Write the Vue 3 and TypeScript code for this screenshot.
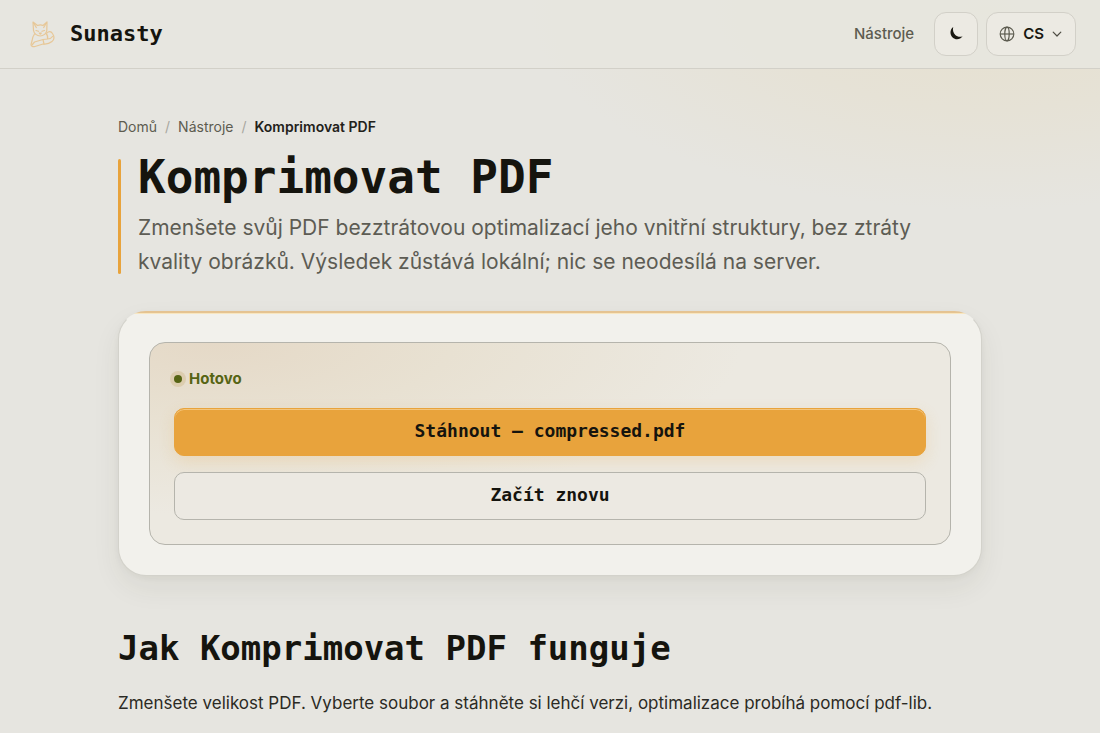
<script setup lang="ts">
import { ref } from 'vue'

interface Crumb {
  label: string
  href?: string
}

const crumbs: Crumb[] = [
  { label: 'Domů', href: '#domu' },
  { label: 'Nástroje', href: '#nastroje' },
  { label: 'Komprimovat PDF' },
]

const fileName = ref<string>('compressed.pdf')
</script>

<template>
  <div class="page">
    <header class="topbar">
      <a class="brand" href="#domu">
        <svg class="brand-mark" viewBox="0 0 36 36" aria-hidden="true">
          <g fill="none" stroke="#e8b468" stroke-width="1.200" stroke-linejoin="round" stroke-linecap="round" opacity="0.6">
            <path d="M9.500 14.500 9 6l4.500 3.500c2-.7 4-.7 5.500 0L23 6l-.2 8.500c-.3 3-3.300 5.500-6.600 5.500s-6.200-2.500-6.700-5.500z" />
            <path d="m10.500 8.500 1.800 3M21.500 8.500l-1.800 3M12 14.500l2.500.8M20.500 14.500l-2.500.8M15.300 17h2l-1 1.200z" />
            <path d="M10.500 18c-1.500 2-2.300 4.500-2.500 7l-1 3.500c0 2 2 2.500 4 2l8-2.500c3.500.5 6.500-.5 9-2.500 2.500-1.500 2.500-5 .5-8-1.500-2.500-4-2.500-5.500-.5" />
            <path d="M22 17.500c1.500 1.500 2 3.500 1.500 5.500l-4.500.5-8.500 2.500-2.500 3M19 23.500l1 4.500M23.500 23c2 0 4-1 5-2.500" />
          </g>
        </svg>
        <span>Sunasty</span>
      </a>
      <nav class="actions" aria-label="Hlavní navigace">
        <a class="nav-link" href="#nastroje">Nástroje</a>
        <button class="tool" type="button" aria-label="Tmavý režim">
          <svg width="16" height="16" viewBox="0 0 16 16" aria-hidden="true">
            <path d="M5.200 1C1.700 3.600 1.700 8.600 4.600 11.400c3 2.900 7.700 2.200 10-1.200-2.500 1-5.400.6-7.300-1.200C5.200 7 4.500 3.900 5.200 1z" fill="#191811" />
          </svg>
        </button>
        <button class="tool lang" type="button" aria-label="Jazyk: CS">
          <svg width="16" height="16" viewBox="0 0 16 16" fill="none" stroke="#5d5c50" stroke-width="1.200" aria-hidden="true">
            <circle cx="8" cy="8" r="6.800" />
            <ellipse cx="8" cy="8" rx="2.200" ry="6.800" />
            <path d="M1.200 8h13.600" />
          </svg>
          <span>CS</span>
          <svg width="10" height="10" viewBox="0 0 10 10" fill="none" stroke="#4c4b42" stroke-width="1.200" stroke-linecap="round" stroke-linejoin="round" aria-hidden="true">
            <path d="m1.200 3.200 3.800 3.800 3.800-3.800" />
          </svg>
        </button>
      </nav>
    </header>

    <main class="content">
      <nav class="crumbs" aria-label="Drobečková navigace">
        <template v-for="(crumb, i) in crumbs" :key="crumb.label">
          <span v-if="i > 0" class="slash" aria-hidden="true">/</span>
          <a v-if="crumb.href" :href="crumb.href">{{ crumb.label }}</a>
          <span v-else class="current" aria-current="page">{{ crumb.label }}</span>
        </template>
      </nav>

      <div class="intro">
        <h1>Komprimovat PDF</h1>
        <p>Zmenšete svůj PDF bezztrátovou optimalizací jeho vnitřní struktury, bez ztráty kvality obrázků. Výsledek zůstává lokální; nic se neodesílá na server.</p>
      </div>

      <section class="card" aria-label="Komprimovat PDF">
        <div class="result">
          <p class="status"><span class="dot"></span>Hotovo</p>
          <button class="btn primary" type="button">Stáhnout — {{ fileName }}</button>
          <button class="btn secondary" type="button">Začít znovu</button>
        </div>
      </section>

      <section class="about">
        <h2>Jak Komprimovat PDF funguje</h2>
        <p>Zmenšete velikost PDF. Vyberte soubor a stáhněte si lehčí verzi, optimalizace probíhá pomocí pdf-lib.</p>
      </section>
    </main>
  </div>
</template>

<style>
body {
  margin: 0;
  background: #e6e5e0;
}
</style>

<style scoped>
.page {
  min-height: 100vh;
  box-sizing: border-box;
  overflow: hidden;
  color: #15140e;
  font-family: Inter, "Liberation Sans", sans-serif;
  background: radial-gradient(ellipse 460px 200px at 90% 10px, #e6e0cf 0%, #e6e2d6 50%, #e6e5e0 100%) #e6e5e0;
}

.topbar {
  display: flex;
  align-items: center;
  justify-content: space-between;
  height: 68px;
  padding: 0 24px;
  border-bottom: 1px solid #d2d0c8;
  background: #e7e6dfe0;
}

.brand {
  display: flex;
  align-items: center;
  gap: 10px;
  color: inherit;
  text-decoration: none;
  font: bold 22px/32px "DejaVu Sans Mono", monospace;
}

.brand-mark {
  width: 36px;
  height: 36px;
}

.actions {
  display: flex;
  align-items: center;
  gap: 8px;
}

.nav-link {
  margin-right: 12px;
  color: #5d5c50;
  font-size: 15px;
  font-weight: 500;
  line-height: 20px;
  text-decoration: none;
}

.tool {
  display: flex;
  align-items: center;
  justify-content: center;
  box-sizing: border-box;
  min-width: 44px;
  height: 44px;
  padding: 0;
  border: 1px solid #d2d0c8;
  border-radius: 12px;
  background: #eceae3;
  color: #191811;
  font: 600 15px/20px Inter, "Liberation Sans", sans-serif;
}

.lang {
  gap: 8px;
  padding: 0 13px 0 12px;
}

.content {
  max-width: 864px;
  margin: 0 auto;
  padding: 48px 24px 24px;
}

.crumbs {
  display: flex;
  gap: 8px;
  font-size: 14px;
  line-height: 20px;
}

.crumbs a {
  color: #5d5c50;
  text-decoration: none;
}

.slash {
  color: #a8a79f;
}

.current {
  color: #22211a;
  font-weight: 600;
}

.intro {
  position: relative;
  margin-top: 16px;
  padding-left: 20px;
}

.intro::before {
  content: "";
  position: absolute;
  top: 6px;
  bottom: 5px;
  left: 0;
  width: 3px;
  border-radius: 2px;
  background: #e8a33c;
}

h1 {
  margin: 0 0 10px;
  font: bold 46px/48px "DejaVu Sans Mono", monospace;
}

.intro p {
  max-width: 800px;
  margin: 0;
  color: #5d5c54;
  font-size: 21px;
  line-height: 34px;
}

.card {
  margin-top: 32px;
  padding: 30px;
  border: 1px solid #d3d2cb;
  border-top-color: transparent;
  border-radius: 28px;
  background: linear-gradient(#e5c391 2px, #f8e6bf 2px) top / 100% 3px no-repeat border-box #f2f1ec;
  box-shadow: 0 12px 28px #3c371e12, 0 2px 6px #3c371e0a;
}

.result {
  display: flex;
  flex-direction: column;
  gap: 16px;
  padding: 24px;
  border: 1px solid #b5b4ac;
  border-radius: 16px;
  background: radial-gradient(ellipse 66% 85% at 8% 0, #e5d9c7 0%, #e8e1d2 45%, #ece9e1 100%) #ece9e1;
}

.status {
  display: flex;
  align-items: center;
  gap: 7px;
  margin: 0 0 1px;
  color: #566414;
  font-size: 15px;
  font-weight: 700;
  line-height: 24px;
}

.dot {
  width: 8px;
  height: 8px;
  border-radius: 50%;
  background: #566414;
  box-shadow: 0 0 0 4px #c9ae7455;
}

.btn {
  height: 48px;
  padding: 0 16px 2px;
  border-radius: 10px;
  color: #15140e;
  font: bold 18px/24px "DejaVu Sans Mono", monospace;
}

.primary {
  border: 1px solid #e8a33c;
  background: #e8a33c;
  box-shadow: inset 0 1px 0 #f4c67c, 0 6px 16px #e8a33c30;
}

.secondary {
  border: 1px solid #b5b4ac;
  background: #ece9e2;
}

.about {
  margin-top: 50px;
}

h2 {
  margin: 0;
  font: bold 34px/44px "DejaVu Sans Mono", monospace;
}

.about p {
  margin: 20px 0 0;
  color: #2b2a24;
  font-size: 17px;
  line-height: 26px;
}
</style>
